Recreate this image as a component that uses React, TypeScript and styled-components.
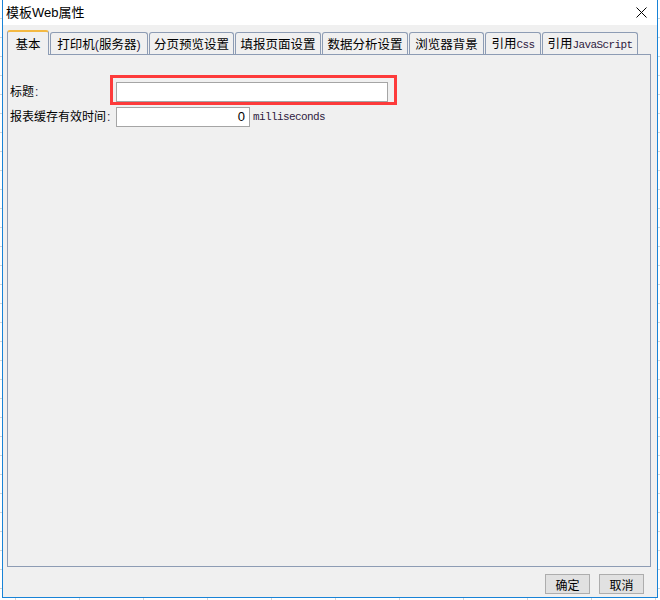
import React from "react";
import styled, { createGlobalStyle } from "styled-components";

const GlobalStyle = createGlobalStyle`
  html, body {
    margin: 0;
    padding: 0;
  }
  body {
    width: 660px;
    height: 600px;
    overflow: hidden;
    background-color: #ffffff;
    background-image:
      repeating-linear-gradient(to bottom, transparent 0 18px, #d6d6d6 18px 19px),
      repeating-linear-gradient(to right, transparent 0 15px, #d6d6d6 15px 16px, transparent 16px 64px);
    font-family: "Liberation Sans", "Noto Sans CJK SC", sans-serif;
    font-size: 12px;
    color: #000;
  }
`;

const Dialog = styled.div`
  box-sizing: border-box;
  margin-left: 2px;
  width: 656px;
  height: 598px;
  border: 1px solid #1883d7;
  border-top: none;
  background: #f0f0f0;
  display: flex;
  flex-direction: column;
`;

const TitleBar = styled.div`
  height: 25px;
  flex: none;
  background: #ffffff;
  display: flex;
  align-items: center;
  justify-content: space-between;
  padding-left: 3px;
`;

const TitleText = styled.span`
  font-family: "Liberation Sans", "Noto Sans CJK SC", sans-serif;
  font-size: 13px;
  color: #000;
  line-height: 25px;
`;

const CloseButton = styled.div`
  width: 46px;
  height: 25px;
  display: flex;
  align-items: center;
  justify-content: center;
  margin-right: -7px;
`;

const TabStrip = styled.div`
  flex: none;
  height: 24px;
  margin-top: 5px;
  padding-left: 4px;
  display: flex;
  align-items: flex-end;
  gap: 1px;
`;

const Tab = styled.div<{ $w: number; $active?: boolean }>`
  box-sizing: border-box;
  width: ${(p) => p.$w}px;
  height: ${(p) => (p.$active ? 25 : 22)}px;
  margin-bottom: ${(p) => (p.$active ? -1 : 0)}px;
  position: relative;
  z-index: ${(p) => (p.$active ? 1 : 0)};
  border: 1px solid #8d9cb4;
  border-bottom: none;
  border-top: ${(p) => (p.$active ? "2px solid #f4b942" : "1px solid #8d9cb4")};
  border-radius: 3px 3px 0 0;
  background: #f0f0f0;
  display: flex;
  align-items: center;
  justify-content: center;
  padding-top: ${(p) => (p.$active ? 0 : 1)}px;
`;

const TabLabel = styled.span`
  font-family: "Noto Sans CJK SC", sans-serif;
  font-size: 12.5px;
  line-height: 18px;
  color: #000;
  white-space: nowrap;
`;

const Mono = styled.span`
  font-family: "Liberation Mono", monospace;
  font-size: 11px;
  letter-spacing: -0.6px;
  color: #2e1a3e;
`;

const Paren = styled.span`
  font-family: "Liberation Sans", sans-serif;
  color: #2e1a3e;
`;

const Panel = styled.div`
  box-sizing: border-box;
  flex: 1;
  margin: 0 6px 0 4px;
  border: 1px solid #8d9cb4;
  padding: 26px 0 0 2px;
`;

const FormGrid = styled.div`
  display: grid;
  grid-template-columns: 106px auto;
  row-gap: 4px;
  align-items: center;
  justify-items: start;
`;

const Label = styled.span`
  font-family: "Noto Sans CJK SC", sans-serif;
  font-size: 12px;
  color: #000;
  line-height: 20px;
`;

const Colon = styled.span`
  font-family: "Liberation Sans", sans-serif;
  color: #2e1a3e;
  margin-left: 1px;
`;

const FieldRow = styled.div`
  display: flex;
  align-items: center;
`;

const InputWrap = styled.div`
  position: relative;
`;

const TextInput = styled.div<{ $w: number; $right?: boolean }>`
  box-sizing: border-box;
  width: ${(p) => p.$w}px;
  height: 20px;
  border: 1px solid #a5a5a5;
  background: #ffffff;
  display: flex;
  align-items: center;
  justify-content: ${(p) => (p.$right ? "flex-end" : "flex-start")};
  padding: 0 4px;
  font-family: "Liberation Sans", sans-serif;
  font-size: 13px;
  color: #000;
`;

const Highlight = styled.div`
  position: absolute;
  left: -6px;
  top: -7px;
  right: -9px;
  bottom: -3px;
  border: 3px solid #fd3b3b;
  pointer-events: none;
`;

const Unit = styled.span`
  margin-left: 3px;
  font-family: "Liberation Mono", monospace;
  font-size: 11px;
  letter-spacing: -0.6px;
  color: #2e1a3e;
`;

const Footer = styled.div`
  flex: none;
  height: 30px;
  box-sizing: border-box;
  padding: 7px 13px 0 0;
  display: flex;
  justify-content: flex-end;
  gap: 9px;
`;

const Button = styled.div`
  box-sizing: border-box;
  width: 45px;
  height: 20px;
  border: 1px solid #adadad;
  background: #e1e1e1;
  display: flex;
  align-items: center;
  justify-content: center;
  font-family: "Noto Sans CJK SC", sans-serif;
  font-size: 12px;
  color: #000;
`;

const tabs: { w: number; content: React.ReactNode; active?: boolean }[] = [
  { w: 42, content: "基本", active: true },
  { w: 98, content: (<>打印机<Paren>(</Paren>服务器<Paren>)</Paren></>) },
  { w: 85, content: "分页预览设置" },
  { w: 86, content: "填报页面设置" },
  { w: 86, content: "数据分析设置" },
  { w: 75, content: "浏览器背景" },
  { w: 56, content: (<>引用<Mono>Css</Mono></>) },
  { w: 96, content: (<>引用<Mono>JavaScript</Mono></>) },
];

export default function App() {
  return (
    <>
      <GlobalStyle />
      <Dialog>
        <TitleBar>
          <TitleText>模板Web属性</TitleText>
          <CloseButton>
            <svg width="11" height="11" viewBox="0 0 11 11">
              <path d="M0.5 0.5 L10.5 10.5 M10.5 0.5 L0.5 10.5" stroke="#000" strokeWidth="1" />
            </svg>
          </CloseButton>
        </TitleBar>
        <TabStrip>
          {tabs.map((t, i) => (
            <Tab key={i} $w={t.w} $active={t.active}>
              <TabLabel>{t.content}</TabLabel>
            </Tab>
          ))}
        </TabStrip>
        <Panel>
          <FormGrid>
            <Label>
              标题<Colon>:</Colon>
            </Label>
            <InputWrap>
              <TextInput $w={272} />
              <Highlight />
            </InputWrap>
            <Label>
              报表缓存有效时间<Colon>:</Colon>
            </Label>
            <FieldRow>
              <TextInput $w={134} $right>
                0
              </TextInput>
              <Unit>milliseconds</Unit>
            </FieldRow>
          </FormGrid>
        </Panel>
        <Footer>
          <Button>确定</Button>
          <Button>取消</Button>
        </Footer>
      </Dialog>
    </>
  );
}
